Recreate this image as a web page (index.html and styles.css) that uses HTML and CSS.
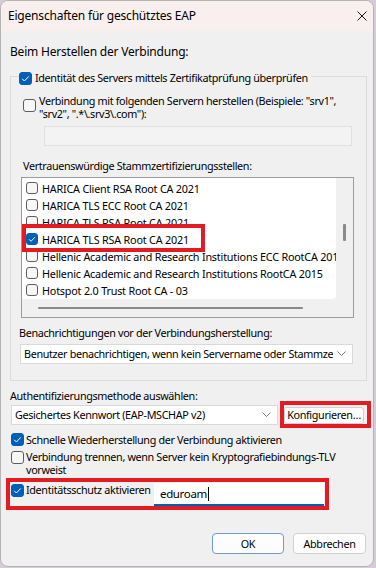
FILE: index.html
```html
<!DOCTYPE html>
<html lang="de">
<head>
<meta charset="utf-8">
<title>Eigenschaften für geschütztes EAP</title>
<link rel="stylesheet" href="styles.css">
</head>
<body>
<div class="dialog">
  <div class="titlebar">
    <span class="title">Eigenschaften für geschütztes EAP</span>
    <svg class="close" width="10" height="10" viewBox="0 0 10 10"><path d="M0.5 0.5 L9.5 9.5 M9.5 0.5 L0.5 9.5" stroke="#1a1a1a" stroke-width="1" fill="none"/></svg>
  </div>
  <div class="content">
    <div class="section-label">Beim Herstellen der Verbindung:</div>
    <div class="group">
      <div class="group-head">
        <span class="cb checked"><svg viewBox="0 0 13 13"><path d="M3.2 6.8 L5.4 9 L9.8 4.4" stroke="#fff" stroke-width="1" fill="none"/></svg></span>
        <span>Identität des Servers mittels Zertifikatprüfung überprüfen</span>
      </div>
      <div class="server-row">
        <span class="cb"></span>
        <span class="wrap-text">Verbindung mit folgenden Servern herstellen (Beispiele: "srv1",<br>"srv2", ".*\.srv3\.com"):</span>
      </div>
      <div class="server-input"></div>
      <div class="ca-label">Vertrauenswürdige Stammzertifizierungsstellen:</div>
      <div class="ca-list">
        <div class="ca-items">
          <div class="ca-item"><span class="cb small"></span><span>HARICA Client RSA Root CA 2021</span></div>
          <div class="ca-item"><span class="cb small"></span><span>HARICA TLS ECC Root CA 2021</span></div>
          <div class="ca-item"><span class="cb small"></span><span>HARICA TLS RSA Root CA 2021</span></div>
          <div class="ca-item"><span class="cb small checked"><svg viewBox="0 0 12 12"><path d="M3 6.3 L5 8.3 L9 4.2" stroke="#fff" stroke-width="1" fill="none"/></svg></span><span>HARICA TLS RSA Root CA 2021</span></div>
          <div class="ca-item"><span class="cb small"></span><span>Hellenic Academic and Research Institutions ECC RootCA 2015</span></div>
          <div class="ca-item"><span class="cb small"></span><span>Hellenic Academic and Research Institutions RootCA 2015</span></div>
          <div class="ca-item"><span class="cb small"></span><span>Hotspot 2.0 Trust Root CA - 03</span></div>
        </div>
        <div class="vscroll"><span class="vthumb"></span></div>
        <div class="hscroll"><span class="hthumb"></span></div>
        <div class="ca-mark"></div>
      </div>
      <div class="notify-label">Benachrichtigungen vor der Verbindungsherstellung:</div>
      <div class="select notify-select">
        <span class="select-text">Benutzer benachrichtigen, wenn kein Servername oder Stammzertifikat angegeben ist</span>
        <svg class="chev" width="9" height="5" viewBox="0 0 9 5"><path d="M0.5 0.5 L4.5 4.5 L8.5 0.5" stroke="#7a7a7a" stroke-width="1" fill="none"/></svg>
      </div>
    </div>
    <div class="auth-label">Authentifizierungsmethode auswählen:</div>
    <div class="auth-row">
      <div class="select auth-select">
        <span class="select-text">Gesichertes Kennwort (EAP-MSCHAP v2)</span>
        <svg class="chev" width="9" height="5" viewBox="0 0 9 5"><path d="M0.5 0.5 L4.5 4.5 L8.5 0.5" stroke="#7a7a7a" stroke-width="1" fill="none"/></svg>
      </div>
      <div class="mark conf-mark"><span class="btn conf-btn">Konfigurieren…</span></div>
    </div>
    <div class="check-row fast-row">
      <span class="cb checked"><svg viewBox="0 0 13 13"><path d="M3.2 6.8 L5.4 9 L9.8 4.4" stroke="#fff" stroke-width="1" fill="none"/></svg></span>
      <span>Schnelle Wiederherstellung der Verbindung aktivieren</span>
    </div>
    <div class="check-row tlv-row">
      <span class="cb"></span>
      <span class="wrap-text">Verbindung trennen, wenn Server kein Kryptografiebindungs-TLV<br>vorweist</span>
    </div>
    <div class="mark ident-mark">
      <span class="cb checked"><svg viewBox="0 0 13 13"><path d="M3.2 6.8 L5.4 9 L9.8 4.4" stroke="#fff" stroke-width="1" fill="none"/></svg></span>
      <span class="ident-text">Identitätsschutz aktivieren</span>
      <div class="ident-input"><span>eduroam</span><span class="caret"></span></div>
    </div>
    <div class="buttons">
      <span class="btn ok-btn">OK</span>
      <span class="btn cancel-btn">Abbrechen</span>
    </div>
  </div>
</div>
</body>
</html>
```
FILE: styles.css
```css
* { box-sizing: border-box; }
html, body { margin: 0; padding: 0; }
body {
  width: 376px;
  height: 568px;
  overflow: hidden;
  background: #d6ccd8;
  font-family: "Noto Sans", sans-serif;
  font-size: 10.8px;
  letter-spacing: -0.35px;
  color: #000;
}
.dialog {
  width: 374px;
  height: 567px;
  background: #f0f0f0;
  border: 1px solid #b4b4b4;
  border-radius: 8px;
  overflow: hidden;
  display: flex;
  flex-direction: column;
}
.titlebar {
  height: 30px;
  flex: none;
  background: #f9efee;
  display: flex;
  align-items: center;
  justify-content: space-between;
  padding: 0 6px 0 7px;
}
.title { line-height: 16px; font-size: 12px; letter-spacing: -0.2px; }
.close { display: block; }
.content { display: flex; flex-direction: column; align-items: flex-start; }
.section-label { margin: 13px 0 0 9px; line-height: 16px; font-size: 12px; letter-spacing: -0.2px; }

.cb {
  flex: none;
  width: 13px;
  height: 13px;
  border: 1px solid #5d5d5d;
  border-radius: 3px;
  background: #f7f7f7;
  display: block;
}
.cb.small { width: 12px; height: 12px; }
.cb.checked { background: #005fb8; border-color: #005fb8; }
.cb svg { display: block; margin: -1px; width: calc(100% + 2px); height: calc(100% + 2px); }

.group {
  margin: 16px 0 0 9px;
  width: 357px;
  border: 1px solid #dcdcdc;
  padding-bottom: 16px;
  display: flex;
  flex-direction: column;
  align-items: flex-start;
}
.group-head {
  margin: -7px 0 0 8px;
  display: flex;
  align-items: center;
  gap: 3px;
  height: 16px;
  line-height: 16px;
  padding-right: 3px;
  background: #f0f0f0;
}
.server-row {
  margin: 8px 0 0 12px;
  display: flex;
  align-items: flex-start;
  gap: 3px;
}
.server-row .cb { margin-top: 5px; }
.wrap-text { line-height: 13.3px; white-space: nowrap; }
.server-input {
  margin: 5px 0 0 33px;
  width: 308px;
  height: 20px;
  background: #f3f3f3;
  border: 1px solid #e0e0e0;
}
.ca-label { margin: 12px 0 0 12px; line-height: 16px; }
.ca-list {
  position: relative;
  margin: 3px 0 0 10px;
  width: 333px;
  height: 141px;
  border: 1px solid #9c9c9c;
  background: #f0f0f0;
  display: grid;
  grid-template-columns: 1fr 17px;
  grid-template-rows: 1fr 18px;
}
.ca-items {
  background: #fff;
  overflow: hidden;
  padding: 2px 0 0 4px;
  border-bottom-right-radius: 4px;
  letter-spacing: -0.2px;
}
.ca-item {
  height: 17px;
  display: flex;
  align-items: center;
  gap: 4px;
  white-space: nowrap;
}
.vscroll { padding: 46px 0 0 7px; }
.vthumb { display: block; width: 3px; height: 17px; background: #8a8a8a; border-radius: 1px; }
.hscroll { grid-column: 1 / span 2; padding: 8px 0 0 16px; }
.hthumb { display: block; width: 265px; height: 2px; background: #8a8a8a; border-radius: 1px; }
.ca-mark {
  position: absolute;
  left: 0;
  top: 46px;
  width: 183px;
  height: 28px;
  border: 4px solid #e31b23;
}
.notify-label { margin: 7px 0 0 8px; line-height: 16px; }
.select {
  height: 20px;
  background: #fff;
  border: 1px solid #d9d9d9;
  display: flex;
  align-items: center;
  padding: 0 6px 0 3px;
  gap: 4px;
  overflow: hidden;
}
.select-text { flex: 1; min-width: 0; white-space: nowrap; overflow: hidden; line-height: 16px; }
.chev { flex: none; display: block; }
.notify-select { margin: 3px 0 0 9px; width: 333px; }

.auth-label { margin: 7px 0 0 9px; line-height: 16px; }
.auth-row { margin: -3px 0 0 10px; display: flex; align-items: flex-start; }
.auth-select { width: 267px; margin-top: 4px; }
.mark { border: 4px solid #e31b23; }
.conf-mark { margin-left: 2px; padding: 2px 3px 0 0; }
.btn {
  display: flex;
  align-items: center;
  justify-content: center;
  background: #fdfdfd;
  border: 1px solid #d0d0d0;
  border-radius: 4px;
  line-height: 16px;
  white-space: nowrap;
}
.conf-btn { width: 80px; height: 17px; border-radius: 3px; }

.check-row { display: flex; align-items: flex-start; gap: 2px; margin-left: 10px; }
.fast-row { margin-top: 4px; line-height: 16px; }
.fast-row .cb { margin-top: 1px; }
.tlv-row { margin-top: 2px; }
.tlv-row .cb { margin-top: 1px; }

.ident-mark {
  margin: 2px 0 0 5px;
  width: 323px;
  height: 32px;
  padding-left: 1px;
  display: flex;
  align-items: flex-start;
}
.ident-mark .cb { margin-top: 2px; }
.ident-text { margin-left: 2px; line-height: 16px; white-space: nowrap; }
.ident-input {
  margin: 1px 1px 0 auto;
  width: 170px;
  height: 23px;
  flex: none;
  background: #fff;
  border-bottom: 2px solid #005fb8;
  display: flex;
  align-items: center;
  padding-left: 6px;
  line-height: 16px;
  font-size: 11.5px;
}
.caret { display: block; width: 1px; height: 14px; background: #000; margin-left: 1px; }

.buttons {
  align-self: stretch;
  margin-top: 23px;
  padding-right: 7px;
  display: flex;
  justify-content: flex-end;
  gap: 9px;
}
.ok-btn { width: 72px; height: 21px; border-color: #6f9bd0; }
.cancel-btn { width: 73px; height: 21px; }
```
